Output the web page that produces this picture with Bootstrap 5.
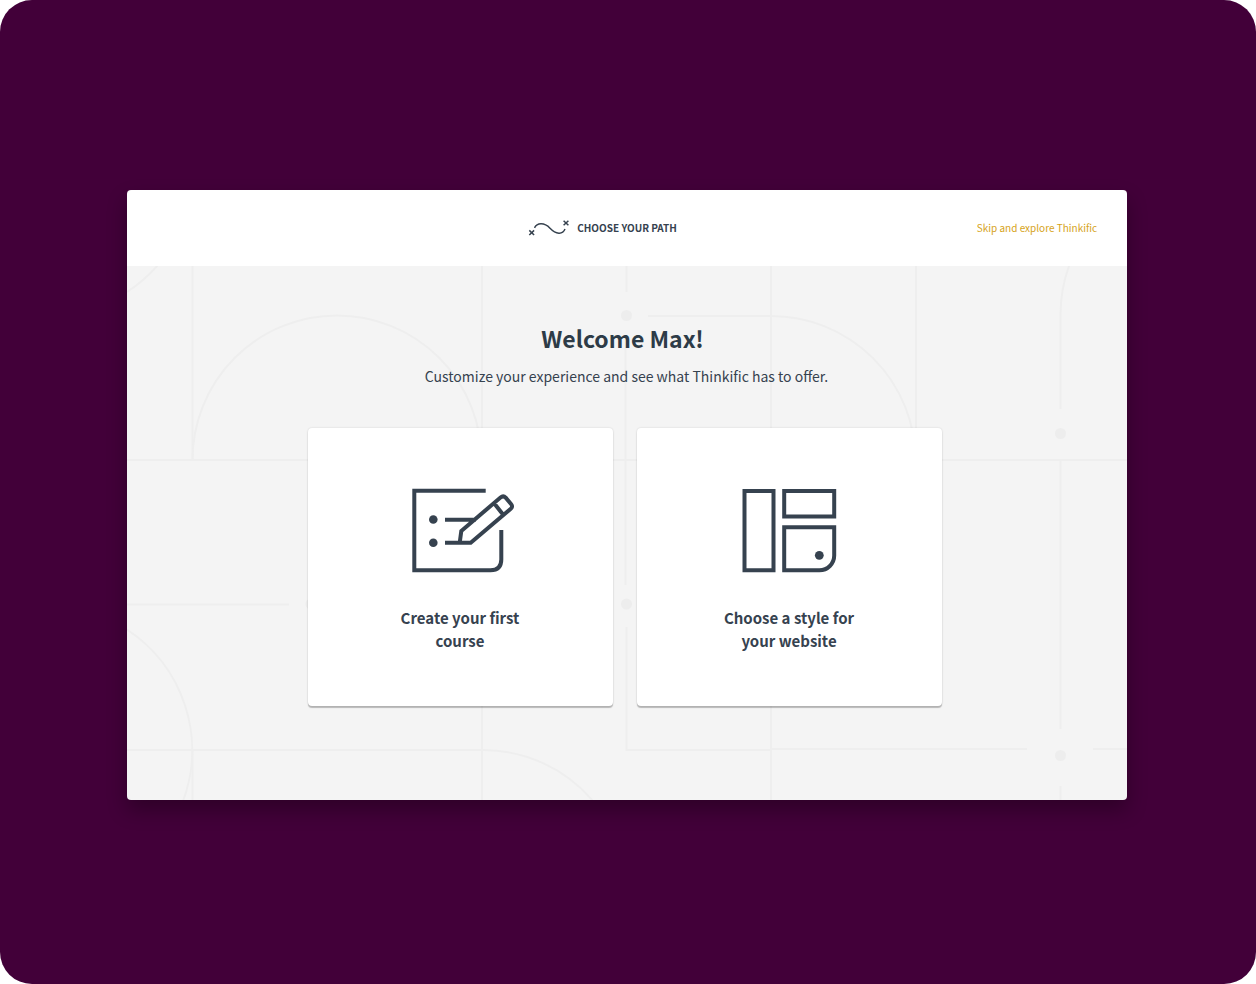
<!DOCTYPE html>
<html lang="en">
<head>
<meta charset="utf-8">
<meta name="viewport" content="width=device-width, initial-scale=1">
<title>Choose your path</title>
<link href="https://cdn.jsdelivr.net/npm/bootstrap@5.3.0/dist/css/bootstrap.min.css" rel="stylesheet">
<style>
  body { font-family: "Noto Sans CJK JP", "Open Sans", sans-serif; color: #36424f; background: #fff; }
  .stage { background: #420039; border-radius: 32px; padding: 190px 129px 184px 127px; }
  .panel { border-radius: 4px; box-shadow: 0 10px 20px rgba(0, 0, 0, .3); background: #f4f4f4; }
  .panel-head { height: 76px; padding: 0 30px; }
  .path-mark { gap: 4px; margin-right: 52px; }
  .path-label { font-size: 10px; line-height: 16px; font-weight: 700; }
  .skip { font-size: 10px; line-height: 16px; color: #d6a319; }
  .panel-main { padding: 54px 5px 94px 0; }
  .pattern { z-index: 0; }
  .content { z-index: 1; }
  .title { font-size: 23px; line-height: 36px; font-weight: 700; color: #2d3b47; margin-bottom: 10px; }
  .intro { font-size: 14px; line-height: 20px; }
  .choices { gap: 24px; margin-top: 42px; }
  .choice { width: 305px; border-radius: 4px; padding: 59px 80px 54px; color: #36424f;
    box-shadow: 0 2px 1px rgba(0, 0, 0, .24), 0 0 2px rgba(0, 0, 0, .16); }
  .choice-text { font-size: 15px; line-height: 23px; font-weight: 700; margin-top: 31px; }
</style>
</head>
<body>
<main class="stage min-vh-100">
  <div class="panel">
    <header class="panel-head bg-white d-flex align-items-center rounded-top">
      <div class="flex-fill w-25"></div>
      <div class="path-mark d-flex align-items-center flex-shrink-0">
        <svg width="48" height="20" viewBox="0 0 48 20" fill="none" stroke="#36424f" stroke-width="1.5" aria-hidden="true">
          <path d="M4.300 12.400l4.800 4.600M9.100 12.400l-4.800 4.600M38.600 2.700l4.800 4.600M43.400 2.700l-4.800 4.600"/>
          <path d="M9.500 9.800C12 4.800 19 4 25 10.200S37.500 17 40 11"/>
        </svg>
        <span class="path-label">CHOOSE YOUR PATH</span>
      </div>
      <div class="flex-fill w-25 d-flex justify-content-end"><a class="skip text-decoration-none" href="#">Skip and explore Thinkific</a></div>
    </header>
    <section class="panel-main position-relative">
      <svg class="pattern position-absolute top-0 start-0 w-100 h-100" viewBox="0 0 1000 534" preserveAspectRatio="xMidYMin slice" fill="none" stroke="#eeeeee" stroke-width="2" aria-hidden="true">
        <path d="M65.5 0V193M65.5 484V534M355 0V534M499.5 0V26M498.5 72V319M499.5 361V484H644M644 0V534M789 0V194M933.5 143V49.5A144.5 144.5 0 0 1 942 0M933.5 194V463M933.5 520V534"/>
        <path d="M0 194H1000M0 338.5H162M0 484H355A144.5 144.5 0 0 1 466 535M644 483H900M966 483H1000M521 50H644A144.5 144.5 0 0 1 788.5 194"/>
        <path d="M65.5 194A144.5 144.5 0 0 1 354.5 194M0 26Q17 15 31 -1M0 363.5A144.5 144.5 0 0 1 56 535"/>
        <g fill="#ededed" stroke="none"><circle cx="499.5" cy="49.5" r="5.5"/><circle cx="499.5" cy="338" r="5.5"/><circle cx="933.5" cy="167.5" r="5.5"/><circle cx="933.5" cy="489.5" r="5.5"/><circle cx="184" cy="338" r="5.5"/></g>
      </svg>
      <div class="content position-relative text-center">
        <h1 class="title me-1">Welcome Max!</h1>
        <p class="intro mb-0 ms-1">Customize your experience and see what Thinkific has to offer.</p>
        <div class="choices d-flex flex-wrap justify-content-center">
          <a href="#" class="choice bg-white text-decoration-none">
            <svg width="108" height="88" viewBox="-4 0 108 88" fill="none" stroke="#36424f" stroke-width="4" class="d-block mx-auto" aria-hidden="true">
              <path d="M75.7 3.7H4.3V83.3H80.5Q91.3 83.3 91.3 72.5V43"/>
              <path d="M35 32.7H66M35 55.7H60.7L100.5 22Q103.3 19.7 101 17L95.7 10.7Q93.3 8.2 90.5 10.5L51.3 44L49.7 55.7M84.3 16.5L93 27.5"/>
              <g fill="#36424f" stroke="none"><circle cx="23.3" cy="32.5" r="4.3"/><circle cx="23.3" cy="55.7" r="4.3"/></g>
            </svg>
            <div class="choice-text">Create your first<br>course</div>
          </a>
          <a href="#" class="choice bg-white text-decoration-none">
            <svg width="98" height="88" viewBox="0 0 98 88" fill="none" stroke="#36424f" stroke-width="4" class="d-block mx-auto" aria-hidden="true">
              <path d="M4.5 4H33.5V83.3H4.5ZM44.2 4H94.2V29.5H44.2ZM44.2 40.3H94.2V68.5A14.8 14.8 0 0 1 79.4 83.3H44.2Z"/>
              <circle cx="79.3" cy="68.3" r="4.4" fill="#36424f" stroke="none"/>
            </svg>
            <div class="choice-text">Choose a style for<br>your website</div>
          </a>
        </div>
      </div>
    </section>
  </div>
</main>
<script src="https://cdn.jsdelivr.net/npm/bootstrap@5.3.0/dist/js/bootstrap.bundle.min.js"></script>
</body>
</html>
